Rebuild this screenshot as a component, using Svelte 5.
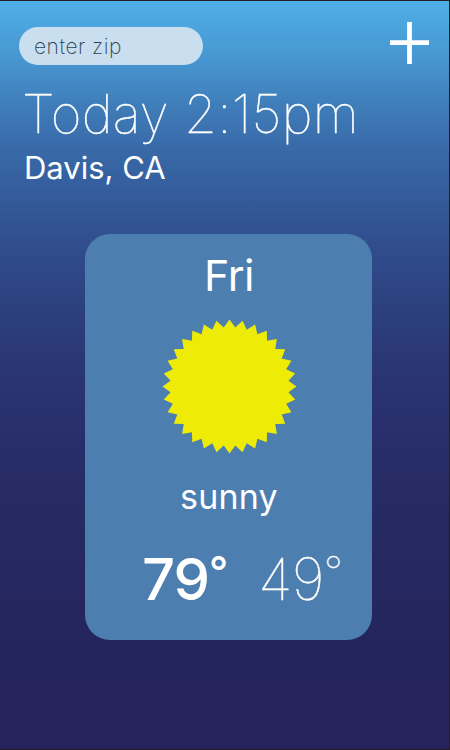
<script>
  const weather = {
    time: 'Today 2:15pm',
    place: 'Davis, CA',
    day: 'Fri',
    condition: 'sunny',
    high: 79,
    low: 49
  };

  const spikes = 32;
  const sun = Array.from({ length: spikes * 2 }, (_, i) => {
    const radius = i % 2 ? 59.2 : 67;
    const angle = (i * Math.PI) / spikes;
    const x = 67.5 + radius * Math.sin(angle);
    const y = 67.5 - radius * Math.cos(angle);
    return `${x.toFixed(2)},${y.toFixed(2)}`;
  }).join(' ');
</script>

<main class="screen">
  <header class="top">
    <input class="zip" type="text" placeholder="enter zip" aria-label="enter zip" />
    <button class="add" aria-label="Add location">
      <svg width="39" height="42" viewBox="0 0 39 42">
        <path d="M19.5 0V42M0 20.6H39" stroke="#fff" stroke-width="4.8" />
      </svg>
    </button>
  </header>

  <h1 class="time">{weather.time}</h1>
  <h2 class="place">{weather.place}</h2>

  <section class="card">
    <h3 class="day">{weather.day}</h3>
    <svg class="sun" width="135" height="135" viewBox="0 0 135 135" aria-hidden="true">
      <polygon points={sun} fill="#eeec06" />
    </svg>
    <p class="condition">{weather.condition}</p>
    <div class="temps">
      <span class="high">{weather.high}<span class="degree">°</span></span>
      <span class="low">{weather.low}<span class="degree">°</span></span>
    </div>
  </section>
</main>

<style>
  :global(body) {
    margin: 0;
  }

  .screen {
    box-sizing: border-box;
    width: 450px;
    height: 750px;
    display: flex;
    flex-direction: column;
    border: solid #231f20;
    border-width: 1px 1px 1px 0;
    background: linear-gradient(
      #4fafe7 0,
      #4795d0 60px,
      #3f7db9 105px,
      #3869a7 150px,
      #345a9a 200px,
      #304c8b 250px,
      #2c3f7d 310px,
      #2a3573 370px,
      #282e6a 440px,
      #262a63 520px,
      #25255d 640px,
      #25235c 750px
    );
    color: #fff;
    font-family: Inter, 'Open Sans', sans-serif;
    overflow: hidden;
  }

  h1,
  h2,
  h3,
  p {
    margin: 0;
    white-space: nowrap;
  }

  .top {
    display: flex;
    justify-content: space-between;
    align-items: flex-start;
    height: 64px;
    padding: 21px 20px 0 19px;
    box-sizing: border-box;
  }

  .zip {
    box-sizing: border-box;
    width: 184px;
    height: 38px;
    margin-top: 5px;
    padding: 0 15px;
    border: 0;
    border-radius: 19px;
    background: #c9dff0;
    color: #3c5063;
    font: 200 21px Inter, sans-serif;
    letter-spacing: 0.5px;
    outline: none;
  }

  .zip::placeholder {
    color: #2f3f4c;
    opacity: 1;
  }

  .add {
    padding: 0;
    border: 0;
    background: none;
    line-height: 0;
  }

  .time {
    margin-left: 22px;
    margin-top: 17px;
    font-size: 53px;
    line-height: 64px;
    font-weight: 100;
    letter-spacing: 0.25px;
    -webkit-text-stroke: 0.45px #fff;
  }

  .place {
    margin-left: 24px;
    margin-top: 3px;
    font-size: 31px;
    line-height: 38px;
    font-weight: 400;
  }

  .card {
    box-sizing: border-box;
    width: 287px;
    height: 406px;
    margin: 47px 0 0 85px;
    padding: 16px 0 0 1px;
    border-radius: 25px;
    background: #4c7eb0;
    display: flex;
    flex-direction: column;
    align-items: center;
  }

  .day {
    font-size: 43px;
    line-height: 50px;
    font-weight: 400;
    letter-spacing: -0.5px;
  }

  .sun {
    margin-top: 19px;
    flex: none;
  }

  .condition {
    margin-top: 22px;
    font-size: 34px;
    line-height: 42px;
    font-weight: 400;
    letter-spacing: 0.2px;
  }

  .temps {
    align-self: flex-start;
    display: flex;
    margin: 26px 0 0 56px;
    font-size: 58px;
    line-height: 70px;
  }

  .high {
    width: 116px;
    font-weight: 500;
    letter-spacing: -1px;
  }

  .low {
    font-weight: 100;
    letter-spacing: -0.8px;
    -webkit-text-stroke: 0.4px #fff;
  }

  .degree {
    font-size: 42px;
    line-height: 1;
    vertical-align: 13px;
  }
</style>
